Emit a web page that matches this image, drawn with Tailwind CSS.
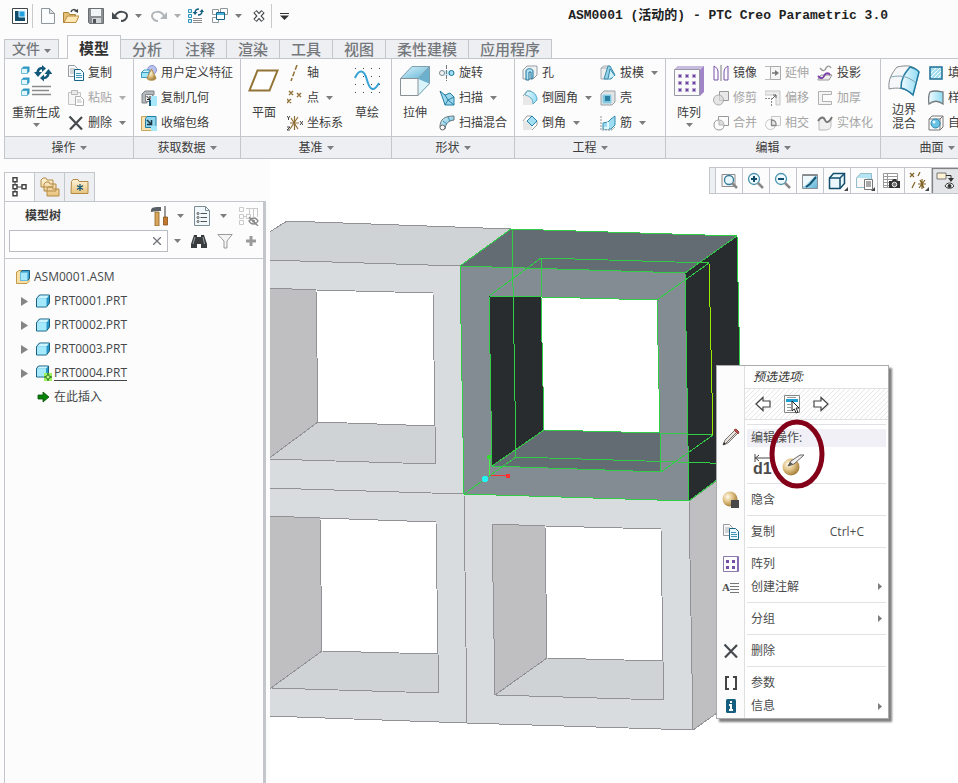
<!DOCTYPE html>
<html lang="zh-CN">
<head>
  <meta charset="UTF-8" />
  <meta name="viewport" content="width=device-width, initial-scale=1.0" />
  <title>ASM0001 (活动的) - PTC Creo Parametric 3.0</title>
  <script src="https://cdn.jsdelivr.net/npm/@tailwindcss/browser@4"></script>
</head>

<body class="flex min-h-screen flex-col overflow-hidden bg-[#fcfcfc] font-['Open_Sans','Noto_Sans_CJK_SC',sans-serif] text-[12px] leading-4 text-[#3c3c3c]">

<!-- Icon sprite ------------------------------------------------------>
<svg class="absolute size-0" aria-hidden="true">
  <defs>
    <linearGradient id="gBlue" x1="0" y1="0" x2="1" y2="1"><stop offset="0" stop-color="#dff5fc"/><stop offset="1" stop-color="#5fb4d6"/></linearGradient>
    <linearGradient id="gSky" x1="0" y1="0" x2="1" y2="0"><stop offset="0" stop-color="#f2fbff"/><stop offset="1" stop-color="#8fdcf5"/></linearGradient>
    <radialGradient id="gGold" cx=".35" cy=".35" r=".7"><stop offset="0" stop-color="#fffbe8"/><stop offset=".5" stop-color="#dfc083"/><stop offset="1" stop-color="#a07a35"/></radialGradient>
    <linearGradient id="gTan" x1="0" y1="0" x2="0" y2="1"><stop offset="0" stop-color="#fff4d8"/><stop offset="1" stop-color="#e9c27c"/></linearGradient>
    <pattern id="hatch" width="5" height="5" patternUnits="userSpaceOnUse"><path d="M0 5 5 0" stroke="#e6e6e6" fill="none"/></pattern>
  </defs>

  <symbol id="caret" viewBox="0 0 7 4"><path d="M0 0h7L3.500 4z" fill="#7d7d7d"/></symbol>
  <symbol id="app" viewBox="0 0 16 16"><path d="M.5.5h15v15H.5z" fill="#fff" stroke="#3f4448"/><path d="M3 3h10v10H3z" fill="#124e6c"/><path d="M7 3h6v6H7z" fill="#22a0e0" stroke="#cdeeff"/></symbol>
  <symbol id="new" viewBox="0 0 16 16"><path d="M1.500.5h8l5 5v10h-13z" fill="#fbfcfd" stroke="#8f969b"/><path d="M9.500.5v5h5z" fill="#dde3e7" stroke="#8f969b"/></symbol>
  <symbol id="open" viewBox="0 0 16 16"><path d="M.5 4.500h5l1 2h6v8H.5z" fill="#e6bf76" stroke="#ab8238"/><path d="M1 14.500 4.500 8H16l-3 6.500z" fill="#ffe7b3" stroke="#b78d44"/><path d="M8 4c1-3 4-3 5-1" fill="none" stroke="#3f4448" stroke-width="1.500"/><path d="m11 3 4-2v4z" fill="#3f4448"/></symbol>
  <symbol id="save" viewBox="0 0 16 16"><path d="M.5.5h15v15h-14l-1-1z" fill="#8b9094" stroke="#6a6e72"/><path d="M3 1h10v7H3z" fill="#f1f5f7"/><path d="M4 10h9v5H4z" fill="#d3d6d9"/><path d="M5 11h3v4H5z" fill="#505458"/></symbol>
  <symbol id="undo" viewBox="0 0 16 16"><path d="M3 8c3-6 12-5 12 0 0 3-3 5-6 5" fill="none" stroke="#454a4e" stroke-width="2"/><path d="M0 4v7h7z" fill="#454a4e"/></symbol>
  <symbol id="redo" viewBox="0 0 16 16"><path d="M13 8C10 2 1 3 1 8c0 3 3 5 6 5" fill="none" stroke="#b2b6b9" stroke-width="2"/><path d="M16 4v7H9z" fill="#b2b6b9"/></symbol>
  <symbol id="regen16" viewBox="0 0 16 16"><g fill="#d6f3fc" stroke="#2e93b9"><path d="M.5 1.500h3v3h-3zM.5 6.500h3v3h-3zM.5 11.500h3v3h-3z"/></g><path d="M5 10.500h9M5 12.500h9M5 14.500h9" stroke="#8d8d8d"/><path d="M7 5c0-3 2-4 4-4M14 3c0 3-2 4-4 4" fill="none" stroke="#166083" stroke-width="1.500"/><path d="m4.500 4 2.500 3 2.500-3zM11.500 4 14 1l2 3z" fill="#166083"/></symbol>
  <symbol id="windows" viewBox="0 0 16 16"><g fill="#fff" stroke="#8f969b"><path d="M.5 1.500h6v5h-6zM8.500.5h7v6h-7zM.5 9.500h6v5h-6z"/></g><path d="M4.500 4.500h8v7h-8z" fill="#fff" stroke="#176487"/><path d="M5 5h7v2H5z" fill="#4bb4de"/></symbol>
  <symbol id="closewin" viewBox="0 0 16 16"><path d="M4 3.500 12 12.500M12 3.500 4 12.500" stroke="#454a4e" stroke-width="4.500"/><path d="M4.500 4 11.500 12M11.500 4l-7 8" stroke="#fff" stroke-width="2"/></symbol>

  <symbol id="regen" viewBox="0 0 32 32"><g fill="#e2f7fd" stroke="#6fbcd8"><path d="M1.500 3.500h6v5h-6zM1.500 14.500h6v5h-6zM1.500 25.500h6v5h-6z"/></g><g fill="#2e97c2"><path d="m1.500 3.500 2-2h6l-2 2zM7.500 3.500l2-2v5l-2 2zM1.500 14.500l2-2h6l-2 2zM7.500 14.500l2-2v5l-2 2zM1.500 25.500l2-2h6l-2 2zM7.500 25.500l2-2v5l-2 2z"/></g><path d="M12 21.500h19M12 25.500h17M12 29.500h19" stroke="#8b8b8b" stroke-width="1.500"/><path d="M17.500 9c0-4 2-6 5-6M28.500 7c0 4-2 6-5 6" fill="none" stroke="#12587a" stroke-width="2.500"/><path d="m14 7 4 5 4-5zM22 0v7l4-3.500zM24.500 9l4-5 4 5zM24 9.500v7L20 13z" fill="#12587a"/></symbol>
  <symbol id="copy" viewBox="0 0 16 16"><path d="M.5.5h6l3 3v8h-9z" fill="#f8f8f8" stroke="#959ba0"/><path d="M2 4h5M2 6h5M2 8h4" stroke="#a9aeb2"/><path d="M6.500 4.500h6l3 3v8h-9z" fill="#eefaff" stroke="#176487"/><path d="M8 8.500h5M8 10.500h6M8 12.500h6" stroke="#4597b8"/></symbol>
  <symbol id="paste" viewBox="0 0 16 16"><path d="M.5 2.500h12v12H.5z" fill="#f5f5f5" stroke="#c4c4c4"/><path d="M3.500.5h6v4h-6z" fill="#e9e9e9" stroke="#b8b8b8"/><path d="M7.500 6.500h5l3 3v6h-8z" fill="#fff" stroke="#b0b0b0"/><path d="M9 10h4M9 12h5" stroke="#bbb"/></symbol>
  <symbol id="del" viewBox="0 0 16 16"><path d="m1.500 1.500 12.500 13M14 2 2 14.500" stroke="#454a4e" stroke-width="2.200"/></symbol>
  <symbol id="udf" viewBox="0 0 16 16"><circle cx="11" cy="5" r="4.500" fill="#b9c0ec" stroke="#8b93cf"/><path d="M.5 7.500h7v5h-7z" fill="#a2e4f8" stroke="#3b9cc0"/><path d="M.5 7.500 3 5h6L7.500 7.500z" fill="#d7f5fe" stroke="#3b9cc0"/><path d="m10.500 4 4.500 9c0 3-9 3-9 0z" fill="url(#gGold)" stroke="#b28d4b"/></symbol>
  <symbol id="copygeo" viewBox="0 0 16 16"><path d="M1 4 4 1h9v4H6v8H1z" fill="#b4b9bd" stroke="#7e8488"/><path d="M4.500 4.500h7v7h-7z" fill="#eceeef" stroke="#888"/><path d="m5.500 6 3 3M9 6v3.500H6" stroke="#222" fill="none"/><path d="M10 6h6v10h-6z" fill="#a9e8fb"/><path d="M8 10h2v6H8z" fill="#125a80"/></symbol>
  <symbol id="shrink" viewBox="0 0 16 16"><path d="M.5 1.500h10v14H.5z" fill="#f9e3b4" stroke="#c8a45c"/><path d="M4.500 3.500 6 1.500h9v9l-2 2H4.500z" fill="#8ed5ee" stroke="#217da4"/><path d="m6 5 4 4M10.500 5v4.500H6" stroke="#1d3641" fill="none" stroke-width="1.500"/><path d="M10 11h6v5h-6z" fill="#a4e6fa"/></symbol>
  <symbol id="plane" viewBox="0 0 32 32"><path d="M9.500 5.500h20l-8 20h-20z" fill="#fff" stroke="#937437" stroke-width="2"/></symbol>
  <symbol id="axis" viewBox="0 0 16 16"><path d="M10 0 4 16" stroke="#8f6f34" stroke-width="1.500" stroke-dasharray="5 2"/></symbol>
  <symbol id="points" viewBox="0 0 16 16"><path d="m2 1 4 4m0-4L2 5m8-2 4 4m0-4-4 4M0 9l4 4m0-4-4 4" stroke="#8f6f34" stroke-width="1.400"/></symbol>
  <symbol id="csys" viewBox="0 0 16 16"><path d="M3 8h9M7.500 1v14M11 2 3 14M4 3l7 11" stroke="#8f6f34" stroke-width="1.200"/><path d="m0 1 1.500 2L3 1M1.500 3v2M13 6l3 4m0-4-3 4M0 12h3l-3 3h3" stroke="#444" fill="none"/></symbol>
  <symbol id="sketch" viewBox="0 0 32 32"><g stroke="#444" stroke-dasharray="1 7"><path d="M4 3.500h25M4 11.500h25M4 19.500h25M4 27.500h25"/></g><path d="M4 13c4-9 9-9 12 2s7 12 12 3" fill="none" stroke="#35a3d6" stroke-width="2"/></symbol>
  <symbol id="extrude" viewBox="0 0 32 32"><path d="M1 14 13 1h18v18L19 31H1z" fill="#c4ebf8"/><path d="M13 1h18L19 14H1z" fill="url(#gBlue)"/><path d="M31 1v18L19 14z" fill="#6bb0cd"/><path d="m19 14 12 5-12 12z" fill="#d9f3fb"/><path d="M1.500 13.500 13 1.500h17.500v17L19 30.500M19 13.500l11.500-12" fill="none" stroke="#7f9fac"/><path d="M1.500 13.500H19v17H1.500z" fill="#fafbfb" stroke="#8a9195"/></symbol>
  <symbol id="revolve" viewBox="0 0 16 16"><path d="M7.500 0v16" stroke="#555" stroke-dasharray="4 1"/><path d="M2.500 5.500h10v5h-10" fill="#c6ebf7"/><circle cx="3" cy="8" r="2.500" fill="#f4f4f4" stroke="#7b8b92"/><circle cx="12.500" cy="8" r="2.500" fill="#a3dff3" stroke="#177096"/><path d="M7.500 0v16" stroke="#777" stroke-dasharray="4 1"/></symbol>
  <symbol id="sweep" viewBox="0 0 16 16"><path d="m1 1 5 4 5-2 4 4v8H6L4 9z" fill="#9ad6ec" stroke="#257fa4"/><path d="m6 5 3 5 6-3M9 10l-3 5M9 10l6 5" stroke="#257fa4" fill="none"/></symbol>
  <symbol id="blend" viewBox="0 0 16 16"><path d="M1 12C1 4 6 1 15 1v4C9 6 7 8 6 14z" fill="url(#gBlue)" stroke="#69767c"/><path d="m4 6 4 3M9 2l2 4" stroke="#3a8dad"/><circle cx="3.500" cy="12.500" r="2.500" fill="#f5f5f5" stroke="#666"/></symbol>
  <symbol id="hole" viewBox="0 0 16 16"><path d="m1 5 4-4h10v9l-4 4H1z" fill="#f0f1f2" stroke="#999fa3"/><path d="M4 15V6c0-3 7-3 7 0v7l-2 1V7H7v8z" fill="#b2e4f5" stroke="#1b7197"/></symbol>
  <symbol id="round" viewBox="0 0 16 16"><path d="M1 6h10v9H1z" fill="#e8e8e8"/><path d="m1 6 4-5h4" fill="none" stroke="#9b9b9b"/><path d="M5 1c7 0 10 4 10 9l-4 4c0-5-3-8-8-9z" fill="url(#gSky)" stroke="#5aa8c6"/></symbol>
  <symbol id="chamfer" viewBox="0 0 16 16"><path d="M1 6h5l4 4v5H1z" fill="#e6e6e6"/><path d="m1 6 4-5h5M10 15l5-5V6" stroke="#a1a1a1" fill="none"/><path d="m10 1 5 5-5 5-5-5z" fill="#a3dff3" stroke="#2983a9"/></symbol>
  <symbol id="draft" viewBox="0 0 16 16"><path d="M1 3h7v11H1zM1 3l3-2h5" fill="#eceeef" stroke="#a5abaf"/><path d="M8 1h2l5 9-4 4H4z" fill="#92d1e7" stroke="#368aad"/><path d="m8 14 2-10 5 7" fill="#d1effa" stroke="#368aad"/></symbol>
  <symbol id="shell" viewBox="0 0 16 16"><path d="m1 4 3-3h11v11l-3 3H1z" fill="#e2e4e6" stroke="#9a9fa3"/><path d="M3 5h8v8H3z" fill="#7cc3dc" stroke="#8bd0e9"/><path d="M5 6h5v5H5z" fill="#2a7fa2"/></symbol>
  <symbol id="rib" viewBox="0 0 16 16"><path d="M1 1v14h11l3-3" fill="none" stroke="#8f9498" stroke-dasharray="2 1"/><path d="m3 8 5-1 3-3 4-3v9l-4 4H3z" fill="#9edcf1" stroke="#358db0"/><path d="M8 7v6H4" fill="none" stroke="#e5f8ff" stroke-width="2"/></symbol>
  <symbol id="pattern" viewBox="0 0 32 32"><path d="m1 5 4-4h26v26l-4 4z" fill="#9f85c8"/><path d="m1 5 4-4h26l-4 4z" fill="#c7bbe0"/><path d="M1.500 4.500h25v26h-25z" fill="#fafafa" stroke="#9699a3"/><g fill="#6a469e" stroke="#b6a3d2"><path d="M5.500 9.500h3v3h-3zM12.500 9.500h3v3h-3zM19.500 9.500h3v3h-3zM5.500 16.500h3v3h-3zM12.500 16.500h3v3h-3zM19.500 16.500h3v3h-3zM5.500 23.500h3v3h-3zM12.500 23.500h3v3h-3zM19.500 23.500h3v3h-3z"/></g></symbol>
  <symbol id="mirror" viewBox="0 0 16 16"><path d="M8 0v16" stroke="#7a7a7a"/><path d="M1 1v14h4V7C5 4 3 2 1 1zM15 1v14h-4V7c0-3 2-5 4-6z" fill="#fbfafe" stroke="#7654a6"/></symbol>
  <symbol id="trim" viewBox="0 0 16 16"><path d="M6.500 1.500h9v9h-9z" fill="#e8e8e8" stroke="#999"/><circle cx="5.500" cy="10" r="5" fill="#dcdcdc" fill-opacity=".7" stroke="#aaa"/></symbol>
  <symbol id="merge" viewBox="0 0 16 16"><path d="M5.500 5V1.500h10v9H11A5 5 0 1 1 5.500 5z" fill="#fcfcfc" stroke="#999"/><path d="M6 5c3 0 5 2 5 5H6z" fill="#ddd" stroke="#b3b3b3"/></symbol>
  <symbol id="intersect" viewBox="0 0 16 16"><path d="M6.500 1.500h9v9h-9z" fill="#f8f8f8" stroke="#c6c6c6"/><circle cx="5.500" cy="9.500" r="5" fill="none" stroke="#c6c6c6"/><path d="M6.500 5c3 0 5 2 4.500 5.500H6.500z" fill="#e6e6e6" stroke="#888" stroke-width="1.300"/></symbol>
  <symbol id="extend" viewBox="0 0 16 16"><path d="M0 1.500h15.500v13H0" fill="none" stroke="#bbb"/><path d="M5.500 1.500h10v13h-10z" fill="#f6f6f6" stroke="#aaa"/><path d="M7 8h4" stroke="#777" stroke-width="1.500"/><path d="m10 5 4 3-4 3z" fill="#777"/></symbol>
  <symbol id="offset" viewBox="0 0 16 16"><path d="M0 1h15v14h-4V5H0z" fill="#ededed" stroke="#c6c6c6"/><path d="M0 8.500h6.500V16" stroke="#888" stroke-dasharray="2 1" fill="none"/><path d="m7 9 4-4M8 5h3v3" stroke="#666" fill="none"/></symbol>
  <symbol id="project" viewBox="0 0 16 16"><path d="M3 3c3 4 5 3 6 0 2-3 4-2 5 0" fill="none" stroke="#999" stroke-width="1.400"/><path d="m1 14 3-4h11l-3 5H1z" fill="#eee" stroke="#999"/><path d="M1 11c3 3 5 3 6 0 2-4 5-3 6-1" fill="none" stroke="#7a3fa8" stroke-width="1.800"/></symbol>
  <symbol id="thicken" viewBox="0 0 16 16"><path d="M14.500 1.500h-13v13h13v-3h-9v-7h9z" fill="#f4f4f4" stroke="#b0b0b0"/></symbol>
  <symbol id="solidify" viewBox="0 0 16 16"><path d="M2 15V6c2-4 5-3 6 0 1 2 4 2 6-3v7c0 5-4 5-6 5z" fill="#f0f0f0" stroke="#bbb"/><path d="M1 6c3-5 6-4 7-1s4 3 7-3" fill="none" stroke="#777" stroke-width="1.800"/></symbol>
  <symbol id="boundary" viewBox="0 0 32 32"><path d="M9 2c10-2 16-2 22 5l-6 23C18 23 10 22 1 24 0 14 4 8 9 2z" fill="#f6f7f8" stroke="#868c90"/><path d="M22 2c4 1 7 2 9 5l-6 23c-4-4-8-6-12-7 0-10 4-15 9-21z" fill="url(#gSky)" stroke="#227ca2" stroke-width="1.500"/><path d="M3 12c9-2 17-1 25 6" fill="none" stroke="#7fa5b3"/></symbol>
  <symbol id="fill" viewBox="0 0 16 16"><path d="M2 2h12v12H2z" fill="#a5dff2" stroke="#1f6f92" stroke-width="1.500"/><path d="m3 8 5-5M3 12 12 3M6 13l7-7M10 13l3-3" stroke="#fff"/></symbol>
  <symbol id="style" viewBox="0 0 16 16"><path d="M1 14C0 8 1 4 2 2c4-2 8-1 13 0v12c-4-3-9-4-14 0z" fill="url(#gSky)" stroke="#757b7f" stroke-width="1.300"/></symbol>
  <symbol id="freestyle" viewBox="0 0 16 16"><path d="m1 4 3-3h11v11l-3 3H1zM1 4h11v11M12 4l3-3" fill="none" stroke="#777"/><circle cx="7.500" cy="8.500" r="4.500" fill="#6bc3e4" stroke="#2b86ac"/><circle cx="6" cy="7" r="1.500" fill="#e3f8ff"/></symbol>

  <symbol id="tree" viewBox="0 0 16 20"><g fill="#fff" stroke="#444"><path d="M3 5v10M5 10h6"/><path d="M1 .8h4v4H1zM1 7.800h4v4H1zM1 14.800h4v4H1zM10 7.800h4v4h-4z" stroke-width="1.500"/></g></symbol>
  <symbol id="folders" viewBox="0 0 20 20"><g fill="url(#gTan)" stroke="#b38b46"><path d="M1 3 3 1h3l1 2h6v7H1zM4 7l2-2h3l1 2h6v7H4zM7 12l1-2h4l1 2h6v7H7z"/></g></symbol>
  <symbol id="fav" viewBox="0 0 20 20"><path d="M1.500 4.500 3 2.500h5l1 2h9v12h-17z" fill="url(#gTan)" stroke="#b38b46"/><path d="M10 7v7M7 8.500l6 4M13 8.500l-6 4" stroke="#135777" stroke-width="1.200"/></symbol>
  <symbol id="tools" viewBox="0 0 18 20"><path d="M0 4C1 1 3 1 10 1v4H6L0 6z" fill="#596066"/><path d="M4 6h4v14H4z" fill="#d8a75c" stroke="#8d6223" stroke-width=".8"/><path d="M14 0v12" stroke="#777" stroke-width="1.500"/><path d="M12.500 11h4v8h-4z" fill="#c4792d" stroke="#85501d" stroke-width=".8"/></symbol>
  <symbol id="settings" viewBox="0 0 16 20"><path d="M.5.5h11l4 4v15H.5z" fill="#f0f8fb" stroke="#7e8c93"/><path d="M11.500.5v4h4" fill="none" stroke="#7e8c93"/><path d="M6.500 7.500H13M6.500 11.500H13M6.500 15.500H13" stroke="#555"/><g fill="#fff" stroke="#555"><circle cx="4" cy="7.500" r="1"/><circle cx="4" cy="11.500" r="1"/><circle cx="4" cy="15.500" r="1"/></g></symbol>
  <symbol id="treehide" viewBox="0 0 20 20"><g fill="none" stroke="#cacaca"><path d="M.5 1.500h4v4h-4zM.5 8.500h4v4h-4zM.5 14.500h4v4h-4zM7.500 8.500h4v4h-4zM5 10.500h2M7 2.500h12M10.500 3v5M14.500 3v8M18.500 3v8"/></g><path d="M10 15c3-4 7-4 9 0-2 4-7 4-9 0zM10 11l9 9" fill="none" stroke="#888" stroke-width="1.300"/><circle cx="14.500" cy="15" r="1.500" fill="#888"/></symbol>
  <symbol id="find" viewBox="0 0 16 16"><path d="M3 2h3v2h4V2h3l3 9v4h-6v-4H6v4H0v-4z" fill="#3a3d40"/><path d="M4 4 2 11M12 4l1.500 7" stroke="#9a9ea1"/></symbol>
  <symbol id="funnel" viewBox="0 0 16 16"><path d="M.8 1.500h14.400L10 8v7H7V8z" fill="#f4f4f4" stroke="#9b9b9b"/></symbol>
  <symbol id="asm" viewBox="0 0 14 14"><path d="M1 2 3 .5h10v11l-2 2H.5V2z" fill="#f9dfa4" stroke="#c39a4d"/><path d="m4.500 2.500 1.500-2h7.500v8l-2 2h-7z" fill="#3aa6d4" stroke="#20607d"/><path d="M4.500 2.500h7v8h-7z" fill="#a7e9fc" stroke="#67bddb"/></symbol>
  <symbol id="part" viewBox="0 0 14 14"><path d="m.5 4.500 3-3.500h10v8l-3 4H.5z" fill="#2599c9" stroke="#1d5f7d"/><path d="M1 4.500h9.500v8H1z" fill="#a5e9fd"/><path d="m1 4.500 3-3h9l-2.500 3z" fill="#cdf4ff"/></symbol>
  <symbol id="partactive" viewBox="0 0 16 16"><path d="m.5 3.500 2-2.500h10v8l-2 3H.5z" fill="#2599c9" stroke="#1d5f7d"/><path d="M1 3.500h9v8H1z" fill="#a5e9fd"/><path d="m1 3.500 2-2h9l-2 2z" fill="#cdf4ff"/><path d="M8 8h8v8H8z" fill="#9df25f"/><path d="M12 8v8M8 12h8" stroke="#175c17"/><path d="m12 9.500 2.500 2.500-2.500 2.500L9.500 12z" fill="#b7f683" stroke="#175c17"/></symbol>
  <symbol id="expand" viewBox="0 0 7 9"><path d="M0 0v9l7-4.500z" fill="#858585"/></symbol>
  <symbol id="insert" viewBox="0 0 12 12"><path d="M1 4h5V1l6 5-6 5V8H1z" fill="#078407" stroke="#084f08" stroke-width=".8"/></symbol>

  <symbol id="zoomfit" viewBox="0 0 18 18"><path d="M2 2.500h13v12H2z" fill="#f5f5f5" stroke="#8d8d8d"/><circle cx="9" cy="8" r="4.500" fill="#e8f8fd" stroke="#377e9b" stroke-width="1.300"/><path d="m12 11 5 5" stroke="#888" stroke-width="2.500"/></symbol>
  <symbol id="zoomin" viewBox="0 0 18 18"><circle cx="7" cy="7" r="5.500" fill="#effaff" stroke="#4b92ae" stroke-width="1.300"/><path d="M7 4v6M4 7h6" stroke="#124e6c" stroke-width="2"/><path d="m11 11 5 5" stroke="#888" stroke-width="2.500"/></symbol>
  <symbol id="zoomout" viewBox="0 0 18 18"><circle cx="7" cy="7" r="5.500" fill="#effaff" stroke="#4b92ae" stroke-width="1.300"/><path d="M4 7h6" stroke="#124e6c" stroke-width="2"/><path d="m11 11 5 5" stroke="#888" stroke-width="2.500"/></symbol>
  <symbol id="repaint" viewBox="0 0 18 18"><path d="M1.500 2.500h15v14h-15z" fill="url(#gBlue)" stroke="#879197"/><path d="M2 3h14v1H2z" fill="#888"/><path d="M2 4h12L4 14H2z" fill="#eef9fd"/><path d="M15 5 9 12l-4 3" stroke="#135777" stroke-width="2" fill="none"/></symbol>
  <symbol id="viewcube" viewBox="0 0 18 18"><path d="m1.500 6 4-4.500h11v10l-4.500 5H1.500z" fill="#eaf8fd" stroke="#124e6c" stroke-width="1.500"/><path d="M1.500 6H12v10.500M12 6l4.500-4.500" fill="none" stroke="#124e6c" stroke-width="1.500"/></symbol>
  <symbol id="saved" viewBox="0 0 18 18"><path d="m1.500 6 4-4.500h11v10l-4.500 4H1.500z" fill="#b5e4f3" stroke="#94bccb"/><path d="M2 6h10v9H2z" fill="#f8f8f8"/><path d="M9.500 7.500h8v10h-8z" fill="#fff" stroke="#777"/><path d="M11 10h5M11 12h5M11 14h5" stroke="#555"/></symbol>
  <symbol id="viewmgr" viewBox="0 0 18 18"><path d="M1.500 1.500h14v14h-14zM2 4.500h14M2 7.500h14M2 10.500h14M2 13.500h14M5.500 2v14" fill="#fff" stroke="#999"/><path d="M7 9h3l1-2h3l1 2h3v7H7z" fill="#333"/><circle cx="12.500" cy="12.500" r="2.300" fill="#777" stroke="#eee"/></symbol>
  <symbol id="datum" viewBox="0 0 18 18"><path d="m1 1 4 4m0-4L1 5M11 0 9 4M6 10l-3 6M9 12h8M13 7v10M11 8l4 8M16 8l-6 8" stroke="#806223" stroke-width="1.200"/></symbol>
  <symbol id="annot" viewBox="0 0 18 18"><path d="M1 1h9v6H1z" fill="#fff2d5" stroke="#777"/><path d="M10 3.500h5V6" fill="none" stroke="#333"/><path d="M12 6h6l-3 4z" fill="#333"/><path d="M9 14c2-4 7-4 9 0-2 3-7 3-9 0z" fill="#fff" stroke="#333"/><circle cx="13.500" cy="14" r="2" fill="#333"/></symbol>

  <symbol id="arrow" viewBox="0 0 16 16"><path d="M1 8l7-6.500V5h7v6H8v3.500z" fill="#fff" stroke="#444" stroke-width="1.200"/></symbol>
  <symbol id="pick" viewBox="0 0 18 20"><path d="M1.500 1.500h15v17h-15z" fill="#fff" stroke="#858585"/><path d="M3 5h12v3H3z" fill="#1d9fd2"/><path d="M4 10.500h4M4 13.500h4M4 16.500h4M4 3.500h9" stroke="#999"/><path d="M9 7v10l2.300-2 2 4 1.700-1-2-4h3z" fill="#fff" stroke="#222"/></symbol>
  <symbol id="pencil" viewBox="0 0 18 18"><path d="m1 17 2-5L13 2l3 3L6 15z" fill="#e5e2dd" stroke="#777"/><path d="m12 2 2-1 3 3-1 2z" fill="#b94f4b" stroke="#963d39"/><path d="m1 17 1-3 2 2z" fill="#222"/><path d="M4 15 14 5" stroke="#806d62"/></symbol>
  <symbol id="ball" viewBox="0 0 18 18"><circle cx="8" cy="8" r="7.500" fill="url(#gGold)"/><path d="M9 9h8v8H9z" fill="#484848"/></symbol>
  <symbol id="paint" viewBox="0 0 22 22"><circle cx="9" cy="13" r="8.500" fill="url(#gGold)"/><path d="m6 12 3-5 9-6h4l-10 9z" fill="#f0efed" stroke="#666"/><path d="m6 12 2-4 3 2z" fill="#555"/></symbol>
  <symbol id="dim" viewBox="0 0 18 8"><path d="M1 0v8M1 4h17M5 1 1.500 4 5 7" stroke="#444" fill="none"/></symbol>
  <symbol id="pattern16" viewBox="0 0 16 16"><path d="M.5.500h15v15H.5z" fill="#fdfdfd" stroke="#8b7bab"/><path d="M14 1h1.500v14H14z" fill="#8867b6"/><path d="M3 4h3v3H3zM9 4h3v3H9zM3 10h3v3H3zM9 10h3v3H9z" fill="#7450a5"/></symbol>
  <symbol id="lines" viewBox="0 0 9 14"><path d="M0 3.500h9M0 6.500h9M0 9.500h9M0 12.500h9" stroke="#777"/></symbol>
  <symbol id="params" viewBox="0 0 16 16"><path d="M6 2H3v12h3M10 2h3v12h-3" fill="none" stroke="#444" stroke-width="2"/></symbol>
  <symbol id="info" viewBox="0 0 16 16"><rect x="3" y="1" width="10" height="14" rx="1.500" fill="#155e80"/><path d="M7 4h2M6 7h2v5M6 12h4" stroke="#fff" stroke-width="2" fill="none"/></symbol>
</svg>

<!-- Title bar -------------------------------------------------------->
<header class="flex h-8 shrink-0 items-center pl-3 font-bold">
  <button aria-label="Creo"><svg class="size-4"><use href="#app"/></svg></button>
  <span class="ml-1 mr-[7px] h-6 w-px bg-[#c8cacc]"></span>
  <button aria-label="新建"><svg class="size-4"><use href="#new"/></svg></button>
  <button class="ml-[7px]" aria-label="打开"><svg class="size-4"><use href="#open"/></svg></button>
  <button class="ml-[9px]" aria-label="保存"><svg class="size-4"><use href="#save"/></svg></button>
  <button class="ml-2" aria-label="撤消"><svg class="size-4"><use href="#undo"/></svg></button>
  <button class="ml-[7px]" aria-label="撤消列表"><svg class="h-1 w-[7px]"><use href="#caret"/></svg></button>
  <button class="ml-[9px]" aria-label="重做"><svg class="size-4"><use href="#redo"/></svg></button>
  <button class="ml-[7px] opacity-60" aria-label="重做列表"><svg class="h-1 w-[7px]"><use href="#caret"/></svg></button>
  <button class="ml-[7px]" aria-label="重新生成"><svg class="size-4"><use href="#regen16"/></svg></button>
  <button class="ml-2" aria-label="窗口"><svg class="size-4"><use href="#windows"/></svg></button>
  <button class="ml-[7px]" aria-label="窗口列表"><svg class="h-1 w-[7px]"><use href="#caret"/></svg></button>
  <button class="ml-[9px]" aria-label="关闭"><svg class="size-4"><use href="#closewin"/></svg></button>
  <span class="ml-1 mr-2 h-6 w-px bg-[#c8cacc]"></span>
  <button aria-label="自定义快速访问工具栏"><svg class="h-[7px] w-[9px]" viewBox="0 0 9 7"><path d="M0 0h9v1H0zM0 2.500h9L4.500 7z" fill="#333"/></svg></button>
  <h1 class="ml-auto mr-[70px] whitespace-pre font-['Liberation_Mono','Noto_Sans_CJK_SC',monospace] text-[13px] text-[#222]">ASM0001 (活动的) - PTC Creo Parametric 3.0</h1>
</header>

<!-- Ribbon tabs ------------------------------------------------------>
<nav class="relative z-10 -mb-px flex h-[27px] shrink-0 items-end pl-1 text-[15px] leading-[18px] font-medium text-[#74787c]">
  <button class="mr-2 flex h-5 items-center gap-1 border border-[#c3c6ca] bg-[#eeeff2] px-[7px] text-[14px]">文件<svg class="mt-1 h-1 w-[7px]"><use href="#caret"/></svg></button>
  <button class="h-6 border border-b-0 border-[#c3c6ca] bg-[#fcfcfc] px-[11px] font-bold text-[#333]">模型</button>
  <div class="flex *:h-5 *:border *:border-l-0 *:border-[#c3c6ca] *:bg-[#eeeff2] *:px-[11px]">
    <button>分析</button>
    <button>注释</button>
    <button>渲染</button>
    <button>工具</button>
    <button>视图</button>
    <button>柔性建模</button>
    <button>应用程序</button>
  </div>
</nav>

<!-- Ribbon groups ---------------------------------------------------->
<div class="ml-1 flex h-[101px] shrink-0 overflow-hidden border-y border-l border-[#c3c6ca]">
  <section class="flex w-[129px] shrink-0 flex-col border-r border-[#c3c6ca]">
    <div class="flex flex-1 pt-0.5">
      <button class="ml-[7px] flex w-12 flex-col items-center pt-1"><svg class="size-8 shrink-0"><use href="#regen"/></svg><span class="mt-2 whitespace-nowrap">重新生成</span><svg class="mt-0.5 h-1 w-[7px]"><use href="#caret"/></svg></button>
      <div class="ml-2 flex flex-col gap-px whitespace-nowrap *:flex *:h-6 *:items-center *:gap-1">
        <button><svg class="size-4"><use href="#copy"/></svg>复制</button>
        <button class="text-[#a5a5a5]"><svg class="size-4"><use href="#paste"/></svg>粘贴<svg class="ml-[3px] h-1 w-[7px] opacity-60"><use href="#caret"/></svg></button>
        <button><svg class="size-4"><use href="#del"/></svg>删除<svg class="ml-[3px] h-1 w-[7px]"><use href="#caret"/></svg></button>
      </div>
    </div>
    <button class="flex h-[22px] items-center justify-center gap-1 border-t border-[#c3c6ca] bg-[#eeeff2]">操作<svg class="h-1 w-[7px]"><use href="#caret"/></svg></button>
  </section>

  <section class="flex w-[107px] shrink-0 flex-col border-r border-[#c3c6ca]">
    <div class="flex flex-1 pt-0.5">
      <div class="ml-[7px] flex flex-col gap-px whitespace-nowrap *:flex *:h-6 *:items-center *:gap-1">
        <button><svg class="size-4"><use href="#udf"/></svg>用户定义特征</button>
        <button><svg class="size-4"><use href="#copygeo"/></svg>复制几何</button>
        <button><svg class="size-4"><use href="#shrink"/></svg>收缩包络</button>
      </div>
    </div>
    <button class="flex h-[22px] items-center justify-center gap-1 border-t border-[#c3c6ca] bg-[#eeeff2]">获取数据<svg class="h-1 w-[7px]"><use href="#caret"/></svg></button>
  </section>

  <section class="flex w-[151px] shrink-0 flex-col border-r border-[#c3c6ca]">
    <div class="flex flex-1 pt-0.5">
      <button class="ml-[7px] flex w-8 flex-col items-center pt-1"><svg class="size-8 shrink-0"><use href="#plane"/></svg><span class="mt-2">平面</span></button>
      <div class="ml-[7px] flex flex-col gap-px whitespace-nowrap *:flex *:h-6 *:items-center *:gap-1">
        <button><svg class="size-4"><use href="#axis"/></svg>轴</button>
        <button><svg class="size-4"><use href="#points"/></svg>点<svg class="ml-[3px] h-1 w-[7px]"><use href="#caret"/></svg></button>
        <button><svg class="size-4"><use href="#csys"/></svg>坐标系</button>
      </div>
      <button class="ml-2 flex w-8 flex-col items-center pt-1"><svg class="size-8 shrink-0"><use href="#sketch"/></svg><span class="mt-2">草绘</span></button>
    </div>
    <button class="flex h-[22px] items-center justify-center gap-1 border-t border-[#c3c6ca] bg-[#eeeff2]">基准<svg class="h-1 w-[7px]"><use href="#caret"/></svg></button>
  </section>

  <section class="flex w-[123px] shrink-0 flex-col border-r border-[#c3c6ca]">
    <div class="flex flex-1 pt-0.5">
      <button class="ml-[7px] flex w-8 flex-col items-center pt-1"><svg class="size-8 shrink-0"><use href="#extrude"/></svg><span class="mt-2">拉伸</span></button>
      <div class="ml-2 flex flex-col gap-px whitespace-nowrap *:flex *:h-6 *:items-center *:gap-1">
        <button><svg class="size-4"><use href="#revolve"/></svg>旋转</button>
        <button><svg class="size-4"><use href="#sweep"/></svg>扫描<svg class="ml-[3px] h-1 w-[7px]"><use href="#caret"/></svg></button>
        <button><svg class="size-4"><use href="#blend"/></svg>扫描混合</button>
      </div>
    </div>
    <button class="flex h-[22px] items-center justify-center gap-1 border-t border-[#c3c6ca] bg-[#eeeff2]">形状<svg class="h-1 w-[7px]"><use href="#caret"/></svg></button>
  </section>

  <section class="flex w-[151px] shrink-0 flex-col border-r border-[#c3c6ca]">
    <div class="flex flex-1 pt-0.5">
      <div class="ml-[7px] flex w-[78px] flex-col gap-px whitespace-nowrap *:flex *:h-6 *:items-center *:gap-1">
        <button><svg class="size-4"><use href="#hole"/></svg>孔</button>
        <button><svg class="size-4"><use href="#round"/></svg>倒圆角<svg class="ml-[3px] h-1 w-[7px]"><use href="#caret"/></svg></button>
        <button><svg class="size-4"><use href="#chamfer"/></svg>倒角<svg class="ml-[3px] h-1 w-[7px]"><use href="#caret"/></svg></button>
      </div>
      <div class="flex flex-col gap-px whitespace-nowrap *:flex *:h-6 *:items-center *:gap-1">
        <button><svg class="size-4"><use href="#draft"/></svg>拔模<svg class="ml-[3px] h-1 w-[7px]"><use href="#caret"/></svg></button>
        <button><svg class="size-4"><use href="#shell"/></svg>壳</button>
        <button><svg class="size-4"><use href="#rib"/></svg>筋<svg class="ml-[3px] h-1 w-[7px]"><use href="#caret"/></svg></button>
      </div>
    </div>
    <button class="flex h-[22px] items-center justify-center gap-1 border-t border-[#c3c6ca] bg-[#eeeff2]">工程<svg class="h-1 w-[7px]"><use href="#caret"/></svg></button>
  </section>

  <section class="flex w-[215px] shrink-0 flex-col border-r border-[#c3c6ca]">
    <div class="flex flex-1 pt-0.5">
      <button class="ml-[7px] flex w-8 flex-col items-center pt-1"><svg class="size-8 shrink-0"><use href="#pattern"/></svg><span class="mt-2">阵列</span><svg class="mt-0.5 h-1 w-[7px]"><use href="#caret"/></svg></button>
      <div class="ml-2 flex w-[52px] flex-col gap-px whitespace-nowrap text-[#a5a5a5] *:flex *:h-6 *:items-center *:gap-1">
        <button class="text-[#3c3c3c]"><svg class="size-4"><use href="#mirror"/></svg>镜像</button>
        <button><svg class="size-4"><use href="#trim"/></svg>修剪</button>
        <button><svg class="size-4"><use href="#merge"/></svg>合并</button>
      </div>
      <div class="flex w-[52px] flex-col gap-px whitespace-nowrap text-[#a5a5a5] *:flex *:h-6 *:items-center *:gap-1">
        <button><svg class="size-4"><use href="#extend"/></svg>延伸</button>
        <button><svg class="size-4"><use href="#offset"/></svg>偏移</button>
        <button><svg class="size-4"><use href="#intersect"/></svg>相交</button>
      </div>
      <div class="flex flex-col gap-px whitespace-nowrap text-[#a5a5a5] *:flex *:h-6 *:items-center *:gap-1">
        <button class="text-[#3c3c3c]"><svg class="size-4"><use href="#project"/></svg>投影</button>
        <button><svg class="size-4"><use href="#thicken"/></svg>加厚</button>
        <button><svg class="size-4"><use href="#solidify"/></svg>实体化</button>
      </div>
    </div>
    <button class="flex h-[22px] items-center justify-center gap-1 border-t border-[#c3c6ca] bg-[#eeeff2]">编辑<svg class="h-1 w-[7px]"><use href="#caret"/></svg></button>
  </section>

  <section class="flex min-w-[112px] flex-1 flex-col">
    <div class="flex flex-1 pt-0.5">
      <button class="ml-[7px] flex w-8 flex-col items-center pt-1"><svg class="size-8 shrink-0"><use href="#boundary"/></svg><span class="mt-1.5 leading-[14px]">边界<br>混合</span></button>
      <div class="ml-2 flex flex-col gap-px whitespace-nowrap *:flex *:h-6 *:items-center *:gap-1">
        <button><svg class="size-4"><use href="#fill"/></svg>填充</button>
        <button><svg class="size-4"><use href="#style"/></svg>样式</button>
        <button><svg class="size-4"><use href="#freestyle"/></svg>自由式</button>
      </div>
    </div>
    <button class="flex h-[22px] items-center justify-center gap-1 border-t border-[#c3c6ca] bg-[#eeeff2]">曲面<svg class="h-1 w-[7px]"><use href="#caret"/></svg></button>
  </section>
</div>

<div class="flex flex-1">
  <!-- Model tree ----------------------------------------------------->
  <aside class="flex w-[270px] shrink-0 flex-col pl-1 pr-1 pt-[13px]">
    <div class="relative z-10 -mb-px flex h-[30px] *:-mr-px *:flex *:w-[31px] *:items-center *:justify-center *:border *:border-[#c3c6ca]">
      <button class="border-b-0 bg-[#fcfcfc]" aria-label="模型树"><svg class="h-5 w-4"><use href="#tree"/></svg></button>
      <button class="bg-[#eeeff2]" aria-label="文件夹浏览器"><svg class="size-5"><use href="#folders"/></svg></button>
      <button class="bg-[#eeeff2]" aria-label="收藏夹"><svg class="size-5"><use href="#fav"/></svg></button>
    </div>
    <div class="flex flex-1 flex-col border-t border-r-3 border-l border-[#c3c6ca]">
      <div class="flex h-7 items-center pl-5">
        <h2 class="font-bold">模型树</h2>
        <button class="ml-auto" aria-label="工具"><svg class="h-5 w-[18px]"><use href="#tools"/></svg></button>
        <button class="ml-2" aria-label="工具列表"><svg class="h-1 w-[7px]"><use href="#caret"/></svg></button>
        <button class="ml-2.5" aria-label="设置"><svg class="h-5 w-4"><use href="#settings"/></svg></button>
        <button class="ml-2.5" aria-label="设置列表"><svg class="h-1 w-[7px]"><use href="#caret"/></svg></button>
        <button class="ml-3 mr-1" aria-label="隐藏"><svg class="size-5"><use href="#treehide"/></svg></button>
      </div>
      <div class="flex h-[29px] items-start border-b border-[#c3c6ca] pl-1">
        <div class="flex h-[22px] min-w-0 flex-1 items-center border border-[#b9bcc0] bg-white">
          <input type="text" aria-label="搜索模型树" class="h-full min-w-0 flex-1 px-1 outline-none" />
          <button class="px-1.5" aria-label="清除"><svg class="size-2" viewBox="0 0 8 8"><path d="m0 0 8 8M8 0 0 8" stroke="#707478" stroke-width="1.300"/></svg></button>
        </div>
        <div class="flex h-[22px] items-center pl-1.5">
          <button aria-label="搜索选项"><svg class="h-1 w-[7px]"><use href="#caret"/></svg></button>
          <button class="ml-2.5" aria-label="查找"><svg class="size-4"><use href="#find"/></svg></button>
          <button class="ml-2.5" aria-label="过滤"><svg class="size-4"><use href="#funnel"/></svg></button>
          <button class="ml-3 mr-1.5" aria-label="添加"><svg class="size-3" viewBox="0 0 12 12"><path d="M6 1v10M1 6h10" stroke="#9a9a9a" stroke-width="3"/></svg></button>
        </div>
      </div>
      <ul class="pt-1.5 text-[#44474a] *:flex *:h-6 *:items-center *:pl-4">
        <li class="gap-1 pl-[11px]!"><svg class="size-3.5"><use href="#asm"/></svg>ASM0001.ASM</li>
        <li><svg class="mr-2 h-[9px] w-[7px]"><use href="#expand"/></svg><svg class="mr-1 size-3.5"><use href="#part"/></svg>PRT0001.PRT</li>
        <li><svg class="mr-2 h-[9px] w-[7px]"><use href="#expand"/></svg><svg class="mr-1 size-3.5"><use href="#part"/></svg>PRT0002.PRT</li>
        <li><svg class="mr-2 h-[9px] w-[7px]"><use href="#expand"/></svg><svg class="mr-1 size-3.5"><use href="#part"/></svg>PRT0003.PRT</li>
        <li><svg class="mr-2 h-[9px] w-[7px]"><use href="#expand"/></svg><svg class="mr-0.5 size-4"><use href="#partactive"/></svg><span class="border-b border-[#44474a] leading-[15px]">PRT0004.PRT</span></li>
        <li><svg class="ml-4 mr-1 size-3"><use href="#insert"/></svg><span class="pl-px">在此插入</span></li>
      </ul>
    </div>
  </aside>

  <!-- Graphics window ------------------------------------------------>
  <main class="relative min-w-0 flex-1 bg-white">
    <svg class="absolute inset-0 size-full" viewBox="270 159 688 624" preserveAspectRatio="xMinYMin meet" shape-rendering="crispEdges" stroke-width="1">
      <!-- upper left frame -->
      <g stroke="#929296" stroke-linejoin="round">
        <path d="M268 233 287 221 511 229 460 266 268 260z" fill="#cfd3d6"/>
        <path d="M268 260 460 266 464 494 268 488z" fill="#d8dcdf"/>
        <path d="M268 288 316 290 318 422 268 459z" fill="#bfbfc2"/>
        <path d="M268 459 318 422 435 426 436 464z" fill="#cfd3d6"/>
        <path d="M316 290 433 293 435 426 318 422z" fill="#fff"/>
        <!-- lower left frame -->
        <path d="M268 488 464 494 467 723 268 716z" fill="#d8dcdf"/>
        <path d="M268 516 320 518 322 651 271 688 268 688z" fill="#bfbfc2"/>
        <path d="M271 688 322 651 438 654 439 693z" fill="#cfd3d6"/>
        <path d="M320 518 436 522 438 654 322 651z" fill="#fff"/>
        <!-- lower right frame -->
        <path d="M689 501 744 461 748 691 693 730z" fill="#bfbfc2"/>
        <path d="M464 494 689 501 693 730 467 723z" fill="#d8dcdf"/>
        <path d="M492 524 545 526 547 658 495 695z" fill="#bfbfc2"/>
        <path d="M495 695 547 658 663 661 664 700z" fill="#cfd3d6"/>
        <path d="M545 526 661 529 663 661 547 658z" fill="#fff"/>
      </g>
      <!-- highlighted frame -->
      <g stroke="#32cd46" stroke-linejoin="round">
        <path d="M511 229 737 236 685 273 460 266z" fill="#646c73"/>
        <path d="M737 236 742 461 689 501 685 273z" fill="#282c2f"/>
        <path d="M460 266 685 273 689 501 464 494z" fill="#828c92"/>
        <path d="M489 296 541 297 544 430 492 466z" fill="#282c2f"/>
        <path d="M492 466 544 430 660 433 661 472z" fill="#646c73"/>
        <path d="M541 297 657 300 660 433 544 430z" fill="#fff"/>
        <path d="M512 229 516 457 464 494M516 457 742 464M489 296 541 258 709 263 657 300M541 258V297M660 433 713 435 661 472" fill="none"/>
        <path d="M709 263 713 435" stroke="#9be800"/>
      </g>
      <!-- triad -->
      <path d="M489 475V457" stroke="#4cf04c"/><path d="M491 475 508 476" stroke="#ff3030"/>
      <circle cx="489" cy="457" r="2" fill="#33dd33"/><circle cx="508" cy="476" r="2.500" fill="#ff3030"/><circle cx="485" cy="479" r="3" fill="#22f3f3"/>
    </svg>

    <!-- View toolbar -->
    <div class="absolute top-2 right-0 flex h-[27px] border-y border-l border-[#c3c6ca] bg-[#fcfcfc] *:flex *:w-[27px] *:items-center *:justify-center *:border-l *:border-[#c3c6ca]">
      <span class="w-[5px]! border-l-0! bg-[#eeeff2]"></span>
      <button aria-label="重新调整"><svg class="size-[18px]"><use href="#zoomfit"/></svg></button>
      <button aria-label="放大"><svg class="size-[18px]"><use href="#zoomin"/></svg></button>
      <button aria-label="缩小"><svg class="size-[18px]"><use href="#zoomout"/></svg></button>
      <button aria-label="重画"><svg class="size-[18px]"><use href="#repaint"/></svg></button>
      <button class="relative" aria-label="显示样式"><svg class="size-[18px]"><use href="#viewcube"/></svg><svg class="absolute right-0.5 bottom-0.5 size-1" viewBox="0 0 4 4"><path d="M4 0v4H0z" fill="#444"/></svg></button>
      <button class="relative" aria-label="已保存方向"><svg class="size-[18px]"><use href="#saved"/></svg><svg class="absolute right-0.5 bottom-0.5 size-1" viewBox="0 0 4 4"><path d="M4 0v4H0z" fill="#444"/></svg></button>
      <button aria-label="视图管理器"><svg class="size-[18px]"><use href="#viewmgr"/></svg></button>
      <button class="relative" aria-label="基准显示过滤器"><svg class="size-[18px]"><use href="#datum"/></svg><svg class="absolute right-0.5 bottom-0.5 size-1" viewBox="0 0 4 4"><path d="M4 0v4H0z" fill="#444"/></svg></button>
      <button class="bg-[#e4e5e9] shadow-[inset_1px_1px_1px_#777]" aria-label="注释显示"><svg class="size-[18px]"><use href="#annot"/></svg></button>
    </div>

    <!-- Context menu -->
    <div class="absolute top-[206px] left-[446px] flex w-[173px] flex-col border border-[#a9abae] bg-white text-[#4c4c4c] shadow-[3px_3px_2px_#808080]">
      <div class="flex">
        <div class="flex w-[27px] shrink-0 flex-col items-center bg-[#fcfcfc] pt-[62px]"><svg class="size-[18px]"><use href="#pencil"/></svg></div>
        <div class="flex-1 border-l border-[#dcdee0]">
          <p class="h-[22px] pl-2 leading-[22px] text-[#333] italic">预选选项:</p>
          <div class="relative flex h-8 items-center gap-3 border-y border-[#dfe1e3] pl-2.5">
            <svg class="absolute inset-0 size-full"><rect width="100%" height="100%" fill="url(#hatch)"/></svg>
            <button class="relative" aria-label="上一个"><svg class="size-4"><use href="#arrow"/></svg></button>
            <button class="relative" aria-label="从列表中拾取"><svg class="h-5 w-[18px]"><use href="#pick"/></svg></button>
            <button class="relative rotate-180" aria-label="下一个"><svg class="size-4"><use href="#arrow"/></svg></button>
          </div>
          <div class="mx-0.5 mt-1 border-t border-[#dfe1e3]"></div>
          <p class="mx-0.5 mt-1 h-[18px] bg-[#f0f0f6] pl-1 leading-[18px]">编辑操作:</p>
          <div class="flex h-9 items-center gap-2.5 pl-2">
            <button class="flex flex-col items-end" aria-label="编辑尺寸"><svg class="h-2 w-[18px]"><use href="#dim"/></svg><span class="font-['Liberation_Sans',sans-serif] text-[16px] leading-[14px] font-bold">d1</span></button>
            <button aria-label="外观"><svg class="size-[22px]"><use href="#paint"/></svg></button>
          </div>
        </div>
      </div>
      <div class="flex">
        <div class="w-[27px] bg-[#fcfcfc]"></div>
        <div class="h-px flex-1 border-l border-[#dcdee0] pl-0.5 pr-0.5"><div class="h-px bg-[#dfe1e3]"></div></div>
      </div>
      <button class="flex h-[31px] text-left"><span class="flex h-full w-[27px] items-center justify-center bg-[#fcfcfc]"><svg class="size-[18px]"><use href="#ball"/></svg></span><span class="flex h-full flex-1 items-center border-l border-[#dcdee0] pl-1.5">隐含</span></button>
      <div class="flex">
        <div class="w-[27px] bg-[#fcfcfc]"></div>
        <div class="h-px flex-1 border-l border-[#dcdee0] pl-0.5 pr-0.5"><div class="h-px bg-[#dfe1e3]"></div></div>
      </div>
      <button class="flex h-[31px] text-left"><span class="flex h-full w-[27px] items-center justify-center bg-[#fcfcfc]"><svg class="size-4"><use href="#copy"/></svg></span><span class="flex h-full flex-1 items-center justify-between border-l border-[#dcdee0] pr-6 pl-1.5">复制<kbd class="font-['Open_Sans',sans-serif]">Ctrl+C</kbd></span></button>
      <div class="flex">
        <div class="w-[27px] bg-[#fcfcfc]"></div>
        <div class="h-px flex-1 border-l border-[#dcdee0] pl-0.5 pr-0.5"><div class="h-px bg-[#dfe1e3]"></div></div>
      </div>
      <button class="flex h-[27px] text-left"><span class="flex h-full w-[27px] items-center justify-center bg-[#fcfcfc] pt-1"><svg class="size-4"><use href="#pattern16"/></svg></span><span class="flex h-full flex-1 items-center border-l border-[#dcdee0] pt-1 pl-1.5">阵列</span></button>
      <button class="flex h-[27px] text-left"><span class="flex h-full w-[27px] items-center justify-center bg-[#fcfcfc] pb-1"><b class="font-['Liberation_Serif',serif] text-[11px]">A</b><svg class="h-3.5 w-[9px]"><use href="#lines"/></svg></span><span class="flex h-full flex-1 items-center justify-between border-l border-[#dcdee0] pr-1.5 pb-1 pl-1.5">创建注解<svg class="h-[7px] w-1" viewBox="0 0 4 7"><path d="M0 0v7l4-3.500z" fill="#7d7d7d"/></svg></span></button>
      <div class="flex">
        <div class="w-[27px] bg-[#fcfcfc]"></div>
        <div class="h-px flex-1 border-l border-[#dcdee0] pl-0.5 pr-0.5"><div class="h-px bg-[#dfe1e3]"></div></div>
      </div>
      <button class="flex h-[31px] text-left"><span class="h-full w-[27px] bg-[#fcfcfc]"></span><span class="flex h-full flex-1 items-center justify-between border-l border-[#dcdee0] pr-1.5 pl-1.5">分组<svg class="h-[7px] w-1" viewBox="0 0 4 7"><path d="M0 0v7l4-3.500z" fill="#7d7d7d"/></svg></span></button>
      <div class="flex">
        <div class="w-[27px] bg-[#fcfcfc]"></div>
        <div class="h-px flex-1 border-l border-[#dcdee0] pl-0.5 pr-0.5"><div class="h-px bg-[#dfe1e3]"></div></div>
      </div>
      <button class="flex h-[31px] text-left"><span class="flex h-full w-[27px] items-center justify-center bg-[#fcfcfc]"><svg class="size-4"><use href="#del"/></svg></span><span class="flex h-full flex-1 items-center border-l border-[#dcdee0] pl-1.5">删除</span></button>
      <div class="flex">
        <div class="w-[27px] bg-[#fcfcfc]"></div>
        <div class="h-px flex-1 border-l border-[#dcdee0] pl-0.5 pr-0.5"><div class="h-px bg-[#dfe1e3]"></div></div>
      </div>
      <button class="flex h-[27px] text-left"><span class="flex h-full w-[27px] items-center justify-center bg-[#fcfcfc] pt-1"><svg class="size-4"><use href="#params"/></svg></span><span class="flex h-full flex-1 items-center border-l border-[#dcdee0] pt-1 pl-1.5">参数</span></button>
      <button class="flex h-6 text-left"><span class="flex h-full w-[27px] items-center justify-center bg-[#fcfcfc]"><svg class="size-4"><use href="#info"/></svg></span><span class="flex h-full flex-1 items-center justify-between border-l border-[#dcdee0] pr-1.5 pl-1.5">信息<svg class="h-[7px] w-1" viewBox="0 0 4 7"><path d="M0 0v7l4-3.500z" fill="#7d7d7d"/></svg></span></button>
      <!-- red marker round the appearance button -->
      <svg class="pointer-events-none absolute top-[53px] left-[52px] h-[70px] w-14" viewBox="0 0 56 70"><ellipse cx="28" cy="35" rx="25" ry="32" fill="none" stroke="#840018" stroke-width="5"/></svg>
    </div>
  </main>
</div>
</body>
</html>
